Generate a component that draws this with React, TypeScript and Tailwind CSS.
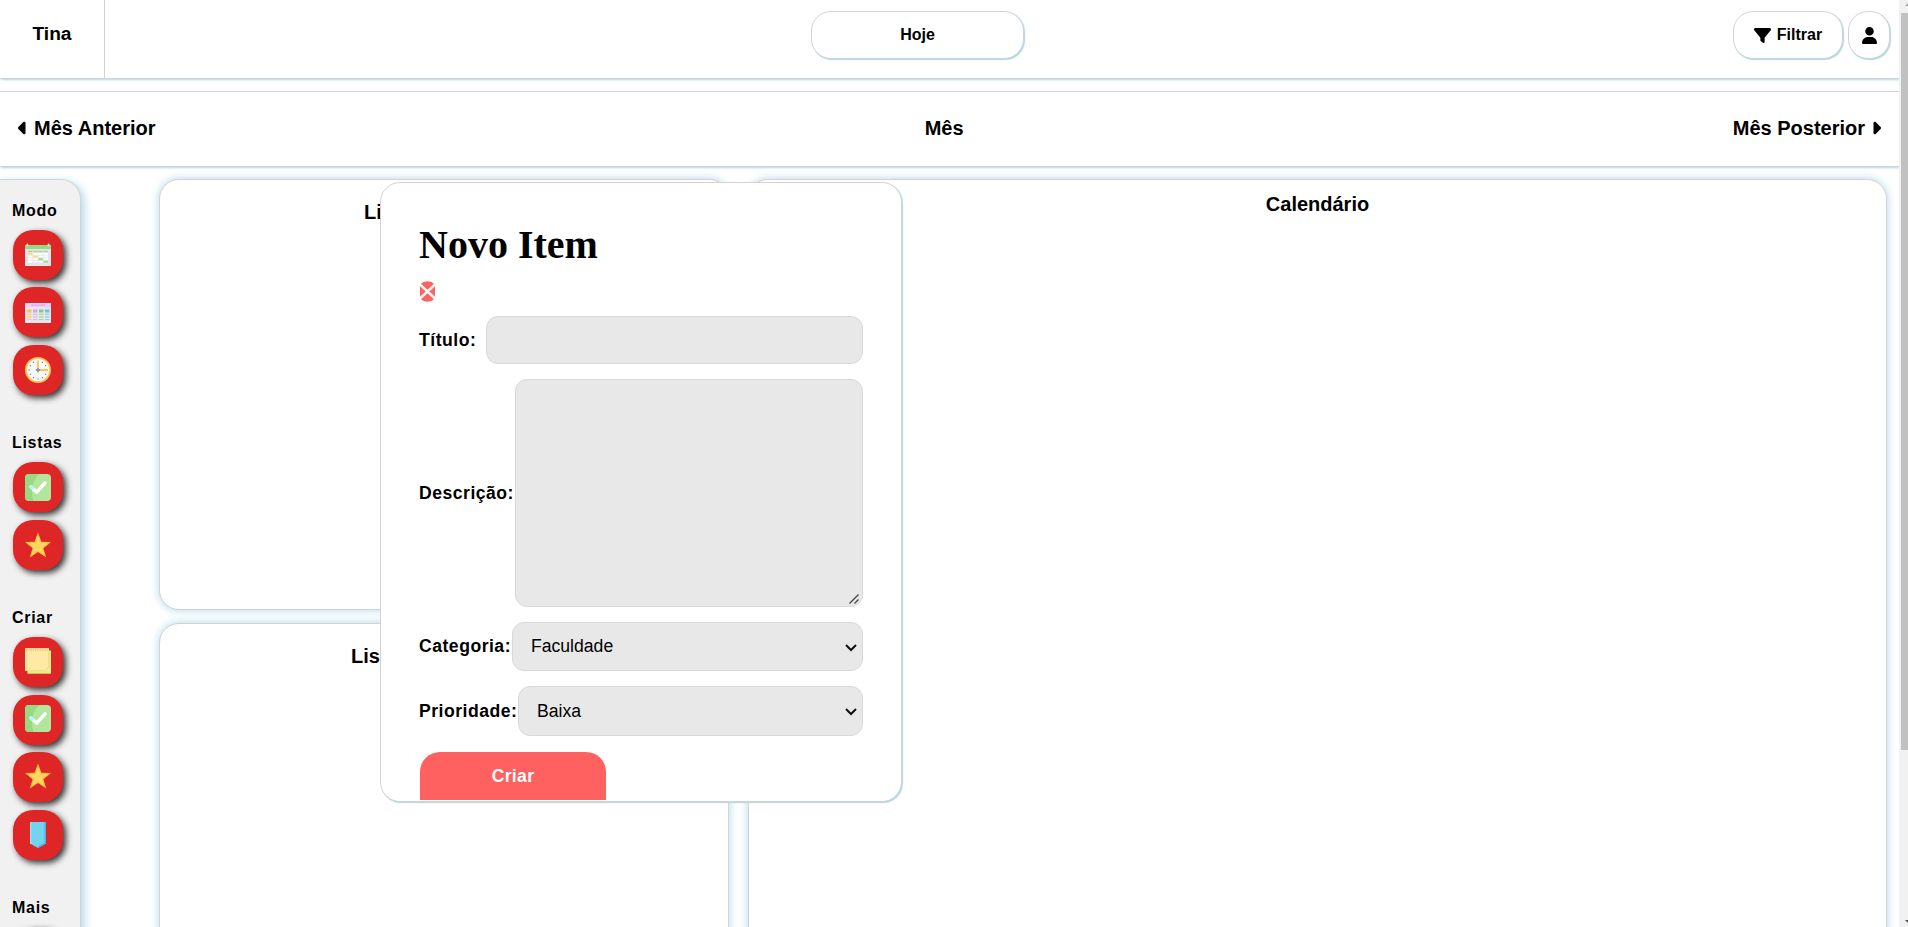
import type { ReactNode } from "react";
import { FaCaretLeft, FaCaretRight, FaFilter, FaUser } from "react-icons/fa6";

function CalendarIcon() {
  return (
    <svg viewBox="0 0 26 26" className="block size-[26px]">
      <rect x="0" y="3" width="26" height="21" fill="#e4e4ea" />
      <rect x="0" y="3" width="26" height="4" fill="#97da7b" />
      <rect x="1.6" y="1.5" width="1.6" height="3" rx="0.8" fill="#eceaec" />
      <rect x="22.8" y="1.5" width="1.6" height="3" rx="0.8" fill="#eceaec" />
      {[3, 8.2, 13.4, 18.6].map((x) => (
        <g key={x}>
          <rect x={x} y="8.8" width="4.2" height="1" fill="#8fcf86" />
          {[11, 13.6, 16.2, 18.8].map((y) => (
            <rect key={y} x={x} y={y} width="4.4" height="1.8" fill="#fff" />
          ))}
        </g>
      ))}
      <rect x="3" y="11" width="4.4" height="1.8" fill="#ffd76e" />
      <rect x="8.2" y="13.6" width="4.4" height="1.8" fill="#ffd76e" />
      <rect x="13.4" y="16.2" width="4.4" height="1.8" fill="#97da7b" />
      <rect x="18.6" y="18.8" width="4.4" height="1.8" fill="#97da7b" />
    </svg>
  );
}

function WeekIcon() {
  const columns = [
    { x: 2, fill: "#ffc24c" },
    { x: 8, fill: "#cda9ee" },
    { x: 14, fill: "#84d079" },
    { x: 20, fill: "#5fc6ee" },
  ];
  return (
    <svg viewBox="0 0 26 26" className="block size-[26px]">
      <rect x="0" y="3" width="26" height="20" fill="#e9e6ee" />
      <rect x="0" y="3" width="26" height="4.2" fill="#ecd0fb" />
      <rect x="6" y="4.5" width="14" height="1.2" fill="#d2a9ef" />
      {columns.map(({ x, fill }) => (
        <g key={x} fill={fill}>
          <rect x={x} y="9.5" width="4.4" height="3" />
          <rect x={x} y="13.8" width="4.4" height="1.1" opacity="0.7" />
          <rect x={x} y="16.4" width="4.4" height="1.1" opacity="0.85" />
          <rect x={x} y="19" width="4.4" height="1.1" opacity="0.7" />
        </g>
      ))}
    </svg>
  );
}

function ClockIcon() {
  const ticks = [30, 60, 120, 150, 180, 210, 240, 270, 300, 330];
  return (
    <svg viewBox="0 0 26 26" className="block size-[26px]">
      <circle cx="13" cy="13" r="12.1" fill="#f7f7fc" stroke="#ffc14a" strokeWidth="1.8" />
      {ticks.map((a) => (
        <circle key={a} cx="13" cy="4.2" r="0.65" fill="#7d7a86" transform={`rotate(${a} 13 13)`} />
      ))}
      <path d="M13 3.6V13H23" fill="none" stroke="#fdc64f" strokeWidth="1.8" />
      <path d="M13 11v4.4M10.8 13h4.4" stroke="#8a8490" strokeWidth="1.3" />
    </svg>
  );
}

function CheckIcon() {
  return (
    <svg viewBox="0 0 26 27" className="block h-[27px] w-[26px]">
      <rect width="26" height="27" rx="4" fill="#b2e69c" />
      <path d="M4 0H14C9 5 4.500 14 8.500 27H4a4 4 0 0 1-4-4V4a4 4 0 0 1 4-4Z" fill="#98d981" />
      <path d="M6 13l5.800 5.200L20 8.800" fill="none" stroke="#fff" strokeWidth="3.400" strokeLinecap="round" strokeLinejoin="round" />
      <path d="M6 12.800l1.300 1.200" stroke="#bdf0fb" strokeWidth="3.400" strokeLinecap="round" />
    </svg>
  );
}

function StarIcon() {
  return (
    <svg viewBox="0 0 26 26" className="block size-[26px]">
      <path d="M13 .5l3.400 9.200 9.600.3-7.600 6.300 2.800 9.200-8.200-5.600-8.200 5.600 2.800-9.200L0 10l9.600-.3Z" fill="#ffc247" />
      <path d="M13 4l2.500 7 7.300.3-5.800 4.600 2.100 6.800L13 18.500l-6.100 4.200 2.100-6.800-5.800-4.600 7.300-.3Z" fill="#ffd65f" />
    </svg>
  );
}

function NoteIcon() {
  return (
    <svg viewBox="0 0 26 26" className="block size-[26px]">
      <rect x="2.500" y="2.500" width="23.500" height="23.200" fill="#d9f08b" />
      <rect x="0" y="0" width="24" height="23" fill="#ffeaa5" />
      <path d="M24 3v17l-3 3H0v-1h20l3-3V3Z" fill="#fbd984" />
      <path d="M0 .8H24" stroke="#f6cf90" strokeWidth="1.600" />
      <path d="M1 2.200H24" stroke="#ee9d6c" strokeWidth="1" strokeDasharray="1 1.300" />
    </svg>
  );
}

function BookmarkIcon() {
  return (
    <svg viewBox="0 0 26 26" className="block size-[26px]">
      <path d="M5 0H21V21.500L13 26 5 21.500Z" fill="#72d4ef" />
      <path d="M5 0h1.500v22.300L5 21.500Z" fill="#8be2f4" />
      <path d="M19.500 0H21V21.500l-8 4.500v-1.600l6.500-3.700Z" fill="#45b8e2" />
    </svg>
  );
}

function ModeButton({ children, className }: { children?: ReactNode; className: string }) {
  return (
    <button
      className={`flex size-[50px] shrink-0 justify-center rounded-[20px] bg-[#df2626] shadow-[3px_3px_6px_#333] ${className}`}
    >
      {children}
    </button>
  );
}

function SideTitle({ children, className }: { children: ReactNode; className: string }) {
  return (
    <h2 className={`-ml-px h-5 shrink-0 text-[16px] leading-5 font-bold tracking-[0.7px] ${className}`}>
      {children}
    </h2>
  );
}

function Sidebar() {
  return (
    <aside className="flex h-[900px] w-[81px] shrink-0 flex-col rounded-tr-[20px] border border-l-0 border-[#d3d3d3] bg-[#f1f1f1] pl-[13px] shadow-[3px_3px_10px_lightblue]">
      <SideTitle className="mt-[21px]">Modo</SideTitle>
      <ModeButton className="mt-[9px] pt-3"><CalendarIcon /></ModeButton>
      <ModeButton className="mt-[7px] pt-[13px]"><WeekIcon /></ModeButton>
      <ModeButton className="mt-2 pt-3"><ClockIcon /></ModeButton>

      <SideTitle className="mt-[38px]">Listas</SideTitle>
      <ModeButton className="mt-[9px] pt-3"><CheckIcon /></ModeButton>
      <ModeButton className="mt-2 pt-3"><StarIcon /></ModeButton>

      <SideTitle className="mt-[38px]">Criar</SideTitle>
      <ModeButton className="mt-[9px] pt-[11px]"><NoteIcon /></ModeButton>
      <ModeButton className="mt-2 pt-[10px]"><CheckIcon /></ModeButton>
      <ModeButton className="mt-[7px] pt-[11px]"><StarIcon /></ModeButton>
      <ModeButton className="mt-2 pt-3"><BookmarkIcon /></ModeButton>

      <SideTitle className="mt-[38px]">Mais</SideTitle>
      <ModeButton className="mt-[9px]" />
    </aside>
  );
}

const pill =
  "flex h-12 items-center justify-center rounded-[20px] border border-[#d3d3d3] bg-white text-[16px] font-bold shadow-[1px_1px_1px_lightblue]";
const card = "rounded-[20px] border border-[#d3d3d3] bg-white shadow-[0_0_10px_lightblue]";
const label = "shrink-0 text-[17.6px] font-bold tracking-[0.5px]";
const field = "w-full rounded-[12px] border border-[#d9d9d9] bg-[#e8e8e8] text-[17.6px] text-black";

function Select({ value, className }: { value: string; className: string }) {
  return (
    <div className="relative min-w-0 flex-1">
      <select className={`${field} block appearance-none px-[18px] ${className}`}>
        <option>{value}</option>
      </select>
      <svg viewBox="0 0 12 8" className="pointer-events-none absolute top-1/2 right-[6px] -mt-[3px] h-2 w-3">
        <path d="M1 1l5 5 5-5" fill="none" stroke="#111" strokeWidth="2" />
      </svg>
    </div>
  );
}

function NewItemDialog() {
  return (
    <form className="absolute top-[182px] left-[380px] flex h-[620px] w-[522px] flex-col rounded-[20px] border border-[#d3d3d3] bg-white pt-[39px] pr-[38px] pl-[38px] shadow-[1px_1px_1px_lightblue]">
      <h1 className="h-[46px] font-['Liberation_Serif',serif] text-[40px] leading-[46px] font-bold">Novo Item</h1>
      <svg viewBox="0 0 15 21" className="mt-[13px] ml-px block h-[21px] w-[15px]">
        <circle cx="7.500" cy="10.500" r="10.200" fill="#ff6060" />
        <path d="M-1 2.500 16 18.500M16 2.500-1 18.500" stroke="#fff" strokeWidth="2.600" />
      </svg>
      <div className="mt-[14px] flex h-12 items-center">
        <label className={`${label} w-[67px]`}>Título:</label>
        <input className={`${field} h-12 min-w-0 flex-1 px-4`} />
      </div>
      <div className="mt-[15px] flex h-[228px] items-center">
        <label className={`${label} w-24`}>Descrição:</label>
        <div className="relative min-w-0 flex-1">
          <textarea className={`${field} block h-[228px] resize-none p-4`} />
          <svg viewBox="0 0 10 10" className="absolute right-[4px] bottom-[3px] size-[10px]">
            <path d="M.5 9.500 9.500.5M5.500 9.500 9.500 5.500" stroke="#444" strokeWidth="1.300" />
          </svg>
        </div>
      </div>
      <div className="mt-[15px] flex h-[49px] items-center">
        <label className={`${label} w-[93px]`}>Categoria:</label>
        <Select value="Faculdade" className="h-[49px]" />
      </div>
      <div className="mt-[15px] flex h-[50px] items-center">
        <label className={`${label} w-[99px]`}>Prioridade:</label>
        <Select value="Baixa" className="h-[50px]" />
      </div>
      <button
        type="button"
        className="mt-4 ml-px h-12 w-[186px] rounded-t-[20px] bg-[#ff6060] text-[17.6px] font-bold tracking-[0.3px] text-white"
      >
        Criar
      </button>
    </form>
  );
}

function Scrollbar() {
  return (
    <div className="relative flex h-full w-[9px] shrink-0 flex-col overflow-hidden bg-[#f1f1f1] pt-[13px] pl-[2px]">
      <div className="h-[737px] w-[7px] bg-[#c1c1c1]" />
      <svg viewBox="0 0 9 927" className="absolute inset-0 h-[927px] w-[9px]">
        <path d="M6 6 9 3V6Z" fill="#a3a3a3" />
        <path d="M6 920H9V923Z" fill="#505050" />
      </svg>
    </div>
  );
}

export default function App() {
  return (
    <div className="relative flex h-[927px] w-full overflow-hidden bg-white font-['Liberation_Sans',Arial,sans-serif] text-black">
      <div className="flex h-full min-w-0 flex-1 flex-col overflow-hidden">
        <header className="flex h-[79px] shrink-0 border-b border-[#d3d3d3] shadow-[1px_1px_2px_lightblue]">
          <div className="w-[105px] border-r border-[#d3d3d3] pt-[22px] text-center text-[19.2px] leading-6 font-bold">
            Tina
          </div>
          <div className="flex flex-1 pt-[11px] pr-[9px]">
            <button className={`${pill} ml-[706px] w-[213px]`}>Hoje</button>
            <button className={`${pill} ml-auto w-[110px] gap-[6px]`}>
              <FaFilter className="size-[17px]" />
              Filtrar
            </button>
            <button className={`${pill} ml-[5px] w-[42px]`}>
              <FaUser className="size-[17px]" />
            </button>
          </div>
        </header>

        <nav className="mt-3 flex h-[76px] shrink-0 items-center justify-between border-y border-[#d3d3d3] pr-[18px] pb-[2px] pl-[18px] text-[20px] font-bold shadow-[1px_1px_2px_lightblue]">
          <button className="flex items-center gap-[6px]">
            <FaCaretLeft className="h-5 w-[10px]" />
            Mês Anterior
          </button>
          <span>Mês</span>
          <button className="flex items-center gap-[6px]">
            Mês Posterior
            <FaCaretRight className="h-5 w-[10px]" />
          </button>
        </nav>

        <main className="mt-3 flex min-h-0 flex-1">
          <Sidebar />
          <div className="ml-[78px] flex w-[570px] shrink-0 flex-col gap-[13px]">
            <section className={`${card} h-[431px] shrink-0 pt-5 pl-[204px]`}>
              <h2 className="text-[20px] leading-6 font-bold">Lista</h2>
            </section>
            <section className={`${card} h-[431px] shrink-0 pt-5 pl-[191px]`}>
              <h2 className="text-[20px] leading-6 font-bold">Lista</h2>
            </section>
          </div>
          <section className={`${card} ml-[19px] h-[900px] w-[1139px] shrink-0 pt-3 text-center`}>
            <h2 className="text-[20px] leading-6 font-bold">Calendário</h2>
          </section>
        </main>
      </div>
      <Scrollbar />
      <NewItemDialog />
    </div>
  );
}
